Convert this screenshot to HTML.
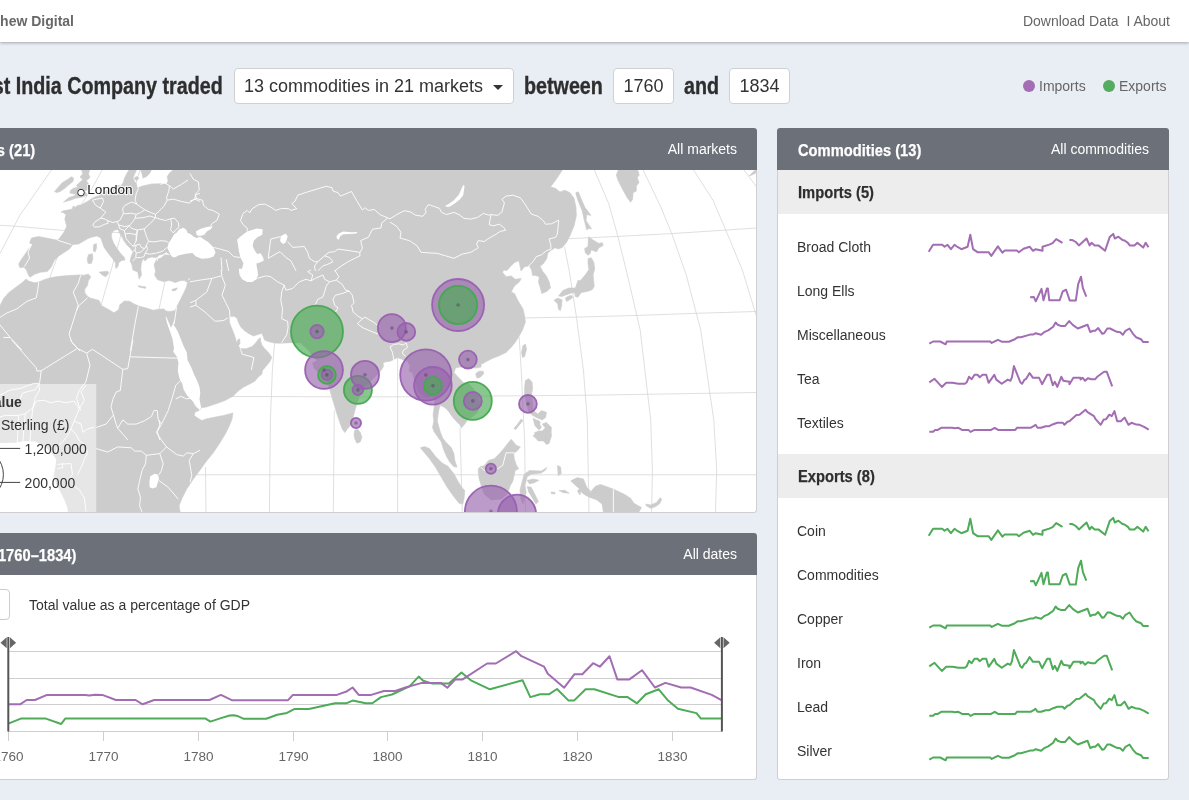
<!DOCTYPE html>
<html lang="en">
<head>
<meta charset="utf-8">
<title>East India Company Trade</title>
<style>
*{box-sizing:border-box;margin:0;padding:0}
html,body{width:1189px;height:800px;overflow:hidden}
body{background:#e9edf4;font-family:"Liberation Sans",sans-serif;color:#333;position:relative;font-size:14px}
.a{position:absolute;white-space:nowrap}
#nav{position:absolute;left:0;top:0;width:1189px;height:42px;background:#fff;box-shadow:0 1px 3px rgba(0,0,0,.3)}
.t14{font-size:14px;line-height:16px}
.cR{font-weight:bold;display:inline-block;transform-origin:100% 50%;transform:scaleX(.857)}
.cL{font-weight:bold;display:inline-block;transform-origin:0 50%;transform:scaleX(.857)}
.h2 .cL,.h2 .cR{transform:scaleX(.865)}
.h1{font-size:23px;line-height:28px;color:#2e2e2e;-webkit-text-stroke:0.35px #2e2e2e}
.h2{font-size:17px;line-height:22px;-webkit-text-stroke:0.25px}
.box{position:absolute;background:#fff;border:1px solid #d0d0d0;border-radius:4px;font-size:18px;color:#333;line-height:34px;height:36px;top:68px}
.panel{position:absolute;background:#fff;border-radius:3px}
.pborder{position:absolute;border:1px solid #cfcfcf;border-top:0;border-radius:0 0 3px 3px;pointer-events:none}
.phead{position:absolute;height:42px;background:#6c7079;border-radius:3px 3px 0 0}
.sub{position:absolute;left:778px;width:391px;height:44px;background:#ededed}
.w{color:#fff}
.d{color:#2e2e2e}
</style>
</head>
<body>
<div id="wrap" style="position:absolute;left:0;top:0;width:1189px;height:800px;overflow:hidden;will-change:transform">
<div id="nav"></div>
<div class="a t14" style="right:1115px;top:13px;font-weight:bold;color:#686868">Matthew Digital</div>
<div class="a t14" style="right:19px;top:13px;color:#666">Download Data &nbsp;I About</div>

<!-- title row -->
<div class="a h1" style="right:966px;top:71.5px"><span class="cR">The East India Company traded</span></div>
<div class="box" style="left:234px;width:280px;padding-left:9px">13 commodities in 21 markets<span style="position:absolute;right:10px;top:16px;width:0;height:0;border-left:5px solid transparent;border-right:5px solid transparent;border-top:5px solid #333"></span></div>
<div class="a h1" style="left:524px;top:71.5px"><span class="cL">between</span></div>
<div class="box" style="left:613px;width:61px;text-align:center">1760</div>
<div class="a h1" style="left:684px;top:71.5px"><span class="cL">and</span></div>
<div class="box" style="left:729px;width:61px;text-align:center">1834</div>
<div class="a" style="left:1023px;top:80px;width:12px;height:12px;border-radius:50%;background:#a36eb4"></div>
<div class="a t14" style="left:1039px;top:78px;color:#666">Imports</div>
<div class="a" style="left:1103px;top:80px;width:12px;height:12px;border-radius:50%;background:#55ab5f"></div>
<div class="a t14" style="left:1119px;top:78px;color:#666">Exports</div>

<!-- map panel -->
<div class="panel" style="left:-20px;top:128px;width:777px;height:385px"></div>
<div id="map" class="a" style="left:-20px;top:170px;width:776px;height:342px;overflow:hidden"><svg width="776" height="342" viewBox="-20 170 776 342" style="position:absolute;left:0;top:0">
<g fill="none" stroke="#d4d4d4" stroke-width="0.75">
<polyline points="-20.0,474.8 756.0,474.8"/>
<polyline points="190.0,396.4 390.0,396.9 590.0,395.2 756.0,392.5"/>
<polyline points="524.6,317.9 577.9,317.1 637.7,315.4 696.5,313.3 756.0,311.5"/>
<polyline points="-20.0,224.0 0.0,225.3 15.0,226.2 62.8,230.4 175.3,234.7 200.0,237.5 570.0,238.6 617.9,236.4 671.8,233.6 725.6,230.1 756.4,228.0"/>
<polyline points="0.0,253.4 20.0,215.0 51.5,170.0"/>
<polyline points="102.2,170.0 91.8,188.7 80.6,205.6 56.2,260.0 49.7,277.8 40.0,310.0"/>
<polyline points="140.0,170.0 123.7,224.4 116.2,252.5 102.2,301.2 95.0,330.0"/>
<polyline points="185.0,190.0 174.3,234.7 166.8,273.1 159.3,307.8 155.0,330.0"/>
<polyline points="205.5,467.0 206.0,512.0"/>
<polyline points="274.6,343.2 272.4,370.0 270.4,420.0 269.4,512.0"/>
<polyline points="334.3,410.4 333.3,512.0"/>
<polyline points="397.6,356.8 397.6,512.0"/>
<polyline points="460.0,428.0 462.3,512.0"/>
<polyline points="519.2,337.0 521.2,370.0 524.6,440.0 525.5,512.0"/>
<polyline points="564.5,246.8 569.1,270.0 576.7,318.8 583.4,370.0 587.3,420.0 589.0,512.0"/>
<polyline points="594.4,170.0 608.7,203.6 617.9,236.4 627.4,275.0 640.2,330.0 650.7,420.0 652.4,470.0 651.6,512.0"/>
<polyline points="643.2,170.0 660.8,207.0 671.8,233.6 686.4,275.4 700.7,330.0 713.8,420.0 716.7,470.0 715.5,512.0"/>
<polyline points="693.6,170.0 713.0,200.3 725.6,229.7 742.4,270.0 756.0,315.0"/>
<polyline points="744.1,170.0 756.4,186.8"/>
<polyline points="14.3,440.0 14.3,512.0"/>
</g>
<g fill="#cccccc" stroke="#cccccc" stroke-width="0.6" stroke-linejoin="round">
<polygon points="54.5,191.5 58.2,187.2 62.2,182.8 67.6,179.4 71.6,176.7 73.6,178.1 73.0,181.4 68.9,184.8 64.9,188.2 60.2,191.5 56.8,192.6"/>
<polygon points="81.0,168.7 82.8,173.4 80.1,177.0 82.8,179.7 79.3,182.8 76.3,185.5 77.9,187.2 73.4,188.2 70.3,190.5 69.9,193.1 75.3,194.2 75.3,195.6 68.9,197.6 63.5,202.0 70.3,200.3 75.3,198.3 81.7,197.2 87.1,195.6 86.4,193.1 84.4,191.5 88.7,188.8 90.1,185.5 87.8,182.8 86.4,180.8 90.1,177.4 88.4,174.0 90.1,168.7"/>
<polygon points="140.3,168.7 142.3,174.7 142.9,178.1 146.3,176.7 149.7,173.4 152.0,168.7"/>
<polygon points="134.5,177.4 137.2,176.5 138.9,178.3 136.9,180.5 134.9,179.4"/>
<polygon points="99.3,272.1 107.8,271.2 108.7,273.1 105.9,276.8 102.1,275.0"/>
<polygon points="88.4,254.8 92.4,253.7 92.9,258.7 91.2,263.8 87.9,263.2 87.3,258.7"/>
<polygon points="93.5,244.7 96.3,243.5 96.6,247.5 95.2,252.0 93.3,250.9"/>
<polygon points="138.3,285.7 146.0,287.0 145.5,288.4 138.8,287.0"/>
<polygon points="171.9,289.5 177.5,287.8 175.8,290.4 172.4,290.9"/>
<polygon points="164.9,254.7 160.8,258.1 156.5,259.6 154.1,264.7 155.6,271.2 154.6,275.0 157.4,279.6 163.1,281.5 169.6,280.6 175.2,282.5 180.9,280.6 187.4,280.6 189.3,277.8 194.9,278.7 215.5,276.8 215.5,253.4 200.0,253.4 191.2,252.5 183.7,253.4 176.2,255.3 169.6,255.3"/>
<polygon points="-21.9,367.7 -21.9,306.3 0.0,305.8 3.4,298.8 8.4,292.9 15.1,287.8 21.9,282.8 26.1,278.9 28.6,281.1 34.5,282.8 38.7,282.0 44.6,279.4 50.5,277.8 57.2,276.6 67.3,275.6 74.0,275.2 79.1,274.9 84.1,275.2 88.3,274.1 90.8,276.9 88.3,281.1 87.5,285.3 84.6,289.5 84.9,292.9 87.5,296.3 90.0,297.9 94.2,299.1 99.2,300.5 101.3,305.5 107.7,308.9 114.0,312.7 118.6,309.7 119.8,304.7 124.5,301.0 129.5,301.3 134.6,304.2 139.6,306.3 146.3,308.0 153.1,310.2 159.0,309.2 164.0,308.9 165.7,310.9 169.9,311.4 174.9,310.6 176.6,307.2 178.3,303.8 180.8,298.8 184.2,292.1 186.7,286.2 187.6,282.0 185.0,281.1 210.3,275.2 210.3,367.7"/>
<polygon points="616.3,175.0 618.8,168.7 637.3,168.7 639.3,175.0 637.3,177.6 639.0,182.6 636.4,186.0 636.4,191.0 633.1,192.7 632.6,199.4 630.6,202.3 627.2,197.8 622.1,188.5 617.9,180.1"/>
<polygon points="575.9,193.5 577.6,191.9 580.9,198.6 585.1,207.8 591.0,215.4 586.8,214.6 586.0,220.5 591.5,228.9 588.2,228.5 586.8,230.2 584.3,220.5 582.1,210.4 578.4,201.1"/>
<polygon points="575.9,192.7 578.4,191.9 580.9,198.6 584.3,207.0 589.3,213.7 586.0,214.1 581.8,208.7 578.1,200.3"/>
<polygon points="749.1,175.9 753.3,171.7 756.4,169.2 758.4,169.2 758.4,171.7 752.5,174.7"/>
<polygon points="588.5,236.7 593.1,240.1 599.0,243.5 602.3,242.6 603.2,245.5 599.0,247.7 596.4,251.9 591.4,249.8 590.2,253.5 588.0,255.2 585.2,252.7 584.7,248.5 588.0,246.5"/>
<polygon points="588.0,258.6 591.4,257.8 593.9,262.8 594.8,268.7 593.1,274.6 593.6,280.5 594.3,286.3 592.2,289.7 587.2,291.4 581.3,292.6 577.9,297.3 575.1,296.4 575.1,293.6 572.9,292.6 566.2,294.8 562.0,296.4 558.6,295.9 562.8,290.6 568.7,288.0 575.4,288.0 577.9,280.5 580.5,280.5 585.5,274.6 588.9,269.5 588.0,263.6"/>
<polygon points="565.3,298.1 567.8,296.4 571.2,295.3 572.9,297.3 570.4,299.3 566.7,301.5"/>
<polygon points="553.9,300.3 557.8,298.1 562.0,299.8 561.6,305.7 560.3,310.7 558.3,309.1 557.8,304.0"/>
<polygon points="522.9,345.7 525.4,344.0 526.6,349.1 524.6,356.6 522.5,357.5 521.5,352.4"/>
<polygon points="475.6,373.8 478.8,371.2 483.1,371.2 483.8,373.8 480.0,377.5 476.9,378.1"/>
<polygon points="354.5,430.6 357.4,428.9 360.2,432.2 361.9,437.3 360.2,442.0 356.9,443.2 354.8,439.0 354.0,434.8"/>
<polygon points="420.3,447.8 424.5,446.6 429.5,448.6 435.4,456.2 442.1,462.9 448.0,466.3 453.9,473.8 458.1,481.4 462.3,488.1 464.9,490.6 464.0,499.1 462.7,504.1 459.0,503.3 453.1,495.7 447.2,487.3 441.3,477.2 435.4,467.1 429.5,458.7 424.5,452.8"/>
<polygon points="478.3,468.8 480.8,466.3 484.2,465.8 488.4,460.4 494.3,458.7 500.2,452.8 504.4,447.8 507.7,443.5 511.1,439.3 513.6,441.9 516.2,445.2 520.4,446.9 517.0,451.1 513.6,453.6 514.5,459.5 516.2,464.6 518.7,468.8 515.3,470.5 514.1,475.5 512.8,481.4 510.3,485.6 508.6,490.6 506.1,494.9 501.0,499.1 490.9,499.9 484.2,494.0 481.7,487.3 479.2,478.9 478.3,472.1"/>
<polygon points="524.2,474.2 529.6,470.5 541.4,471.0 546.8,467.6 545.6,470.1 541.4,473.0 531.3,474.2 526.6,477.2"/>
<polygon points="524.2,474.2 527.1,478.0 524.6,485.6 526.2,492.3 524.6,499.1 522.9,504.1 520.9,499.1 519.9,490.6 522.0,482.2"/>
<polygon points="527.1,480.6 533.0,478.9 538.9,480.2 534.7,482.6 529.6,483.9"/>
<polygon points="527.1,486.4 531.3,487.3 534.7,494.0 538.4,501.6 536.0,504.1 532.1,497.4 528.8,492.3"/>
<polygon points="514.1,428.4 522.0,420.0 522.9,420.8 515.3,429.3"/>
<polygon points="533.0,436.0 538.0,430.9 541.4,431.8 547.3,425.9 550.6,430.1 551.5,436.0 549.0,443.5 546.4,444.4 542.2,439.3 538.9,435.1 535.5,437.7"/>
<polygon points="534.7,423.4 538.0,420.0 540.5,422.5 537.2,426.7"/>
<polygon points="525.4,380.4 528.8,378.7 532.1,382.1 532.6,388.8 531.3,395.5 533.0,403.9 533.0,410.6 538.0,414.0 541.4,410.6 546.4,412.3 545.6,417.4 542.2,419.9 538.0,418.2 533.0,415.7 528.8,412.3 526.6,403.9 524.6,395.5 524.6,387.1"/>
<polygon points="533.0,418.2 538.0,420.7 541.4,427.5 538.9,430.0 535.0,425.8"/>
<polygon points="542.2,424.1 546.4,422.4 551.5,427.5 550.6,435.9 548.1,434.2 545.6,428.3"/>
<polygon points="534.7,432.5 541.4,430.8 546.4,436.7 545.6,440.9 538.0,440.9 535.5,437.6"/>
<polygon points="514.5,428.3 521.2,419.1 522.4,420.1 515.8,429.5"/>
<polygon points="557.4,465.4 560.7,467.1 561.2,473.8 558.2,475.5"/>
<polygon points="571.7,480.6 576.7,478.0 583.4,478.9 586.8,487.3 590.0,490.6 590.0,497.4 583.4,494.0 578.4,487.3 575.0,483.1"/>
<polygon points="559.0,490.6 564.9,490.3 569.1,493.2 563.3,492.7"/>
<polygon points="551.1,492.0 554.8,492.3 555.2,494.0 551.5,493.7"/>
<polygon points="570.8,480.9 577.6,477.7 583.5,479.7 584.8,487.3 590.2,492.3 595.2,486.4 600.3,484.4 606.2,486.4 613.7,489.3 623.8,494.0 630.6,498.2 633.9,503.3 641.5,507.5 638.1,513.4 603.6,513.4 602.0,504.1 596.9,499.9 590.2,497.4 584.3,494.0 580.9,491.5 580.1,494.9 578.1,492.3 577.6,490.3 580.1,489.0 576.7,486.4"/>
<polygon points="645.7,504.1 650.7,504.9 656.6,502.4 660.0,497.7 661.7,499.1 660.0,503.3 655.8,506.6 650.7,508.3 646.5,506.1"/>
<polygon points="61.3,212.8 62.9,210.8 67.6,210.1 72.3,209.0 73.0,206.3 75.7,207.0 77.9,205.3 81.0,205.0 85.1,202.7 88.2,201.0 91.4,198.7 95.2,196.9 99.2,195.6 103.2,192.9 107.3,190.2 111.3,186.8 117.4,185.5 120.7,185.9 123.2,182.8 124.5,178.1 126.8,173.4 129.9,168.7 137.2,168.7 134.9,173.4 133.1,177.4 134.5,181.4 136.6,184.1 137.2,188.2 142.3,186.1 151.7,183.9 161.8,183.7 166.5,184.1 168.1,180.8 167.2,176.7 169.5,173.0 174.6,168.7 214.9,168.7 215.6,256.2 170.0,254.5 166.0,252.0 163.2,254.2 159.3,255.1 156.5,257.8 152.0,257.0 147.5,258.2 145.2,261.0 143.0,258.7 141.3,263.2 140.7,270.0 140.9,270.3 141.5,275.0 139.1,279.1 137.8,272.1 132.9,270.0 131.7,264.3 130.0,261.0 131.2,256.5 132.9,252.0 130.6,248.6 127.2,245.2 123.9,240.7 121.6,236.2 119.4,232.9 118.8,230.8 117.1,229.5 113.7,230.4 111.3,234.0 111.8,238.5 113.7,243.2 117.1,248.8 120.5,253.3 124.4,257.6 125.0,260.1 121.6,260.4 118.8,262.7 118.0,266.6 115.8,268.6 115.4,262.7 112.6,258.7 108.1,253.1 104.2,247.5 102.3,242.4 100.8,237.9 96.9,236.0 92.4,237.1 88.1,238.4 83.4,241.2 78.7,244.0 72.7,244.6 69.7,248.7 64.1,252.5 58.5,256.2 54.4,260.3 51.0,267.5 47.2,271.6 40.3,272.3 34.7,274.2 30.0,277.2 28.5,275.3 26.6,270.3 24.0,267.1 19.9,267.8 18.7,264.1 21.0,260.0 24.7,254.7 28.1,249.7 32.2,245.3 29.6,242.7 31.5,238.0 38.4,236.5 49.1,238.6 57.7,240.3 60.4,237.1 64.1,231.9 66.7,226.2 64.8,219.1 66.0,214.6 61.5,211.6"/>
<polygon points="190.0,160.0 563.0,160.0 562.4,170.0 555.7,180.1 550.6,186.8 555.7,188.5 559.9,191.9 564.9,190.2 570.0,192.7 574.2,198.6 575.9,207.0 576.4,215.4 574.2,225.5 570.0,235.6 566.6,242.3 562.4,247.4 558.2,249.1 555.2,247.7 551.0,250.2 547.7,253.5 546.8,258.6 543.5,263.6 540.1,266.2 542.6,271.2 546.0,275.4 549.3,282.1 550.5,288.0 546.8,291.4 541.8,293.6 540.1,287.2 538.4,282.1 539.3,277.1 535.9,275.4 532.5,275.4 531.7,270.4 530.0,267.0 529.6,265.9 524.6,266.7 521.0,271.0 519.5,263.5 518.7,260.8 514.5,262.5 510.5,266.5 507.0,270.5 503.5,270.0 502.7,272.5 506.1,276.7 511.1,275.9 515.3,279.3 521.2,278.4 519.5,281.8 514.5,286.0 511.1,291.9 514.5,293.5 517.8,300.3 522.9,308.7 524.6,315.4 525.4,322.1 522.9,328.9 519.5,335.6 515.3,342.3 511.1,347.4 506.1,352.4 499.3,355.8 492.6,358.3 485.9,361.7 481.7,364.2 481.2,362.5 481.0,367.0 479.4,367.5 477.5,367.8 474.0,368.0 468.0,368.5 460.0,366.9 455.5,368.0 454.0,372.5 458.0,377.0 463.8,383.1 467.5,382.5 472.0,387.0 476.0,392.5 478.0,397.0 480.0,405.0 477.5,412.5 472.0,417.0 467.5,420.0 465.0,423.8 461.3,428.1 460.0,425.0 455.0,420.0 451.9,416.3 449.4,412.5 446.3,408.8 442.5,406.3 440.0,405.6 438.8,410.0 438.1,415.0 437.3,421.3 438.8,426.7 440.5,432.6 443.0,438.5 446.4,442.7 451.4,447.8 453.9,453.6 454.8,460.4 457.0,467.1 453.9,466.8 449.7,462.1 446.4,456.2 443.5,449.4 441.3,441.9 437.1,436.0 434.1,431.8 432.5,427.5 433.8,421.3 433.1,415.0 434.0,407.5 435.0,400.0 432.5,396.3 427.5,397.5 421.3,395.0 417.5,390.0 416.3,382.5 413.8,377.5 412.5,372.8 409.0,371.3 410.0,366.3 407.5,361.3 400.6,358.8 397.5,357.5 393.8,359.5 390.0,361.3 385.0,362.0 383.1,363.1 383.5,366.5 381.3,370.0 378.4,373.4 371.7,380.1 364.9,386.8 359.9,395.2 356.9,403.6 354.8,411.2 352.8,418.8 350.6,425.5 347.8,428.5 344.8,432.6 342.2,428.9 339.7,422.1 336.3,412.0 333.8,403.6 331.3,395.2 328.8,386.8 327.5,380.0 326.0,374.0 327.0,369.0 323.0,371.0 319.0,373.0 314.0,368.0 312.5,363.0 317.0,360.5 313.0,357.0 310.5,353.0 308.6,350.4 304.4,346.5 300.2,342.7 290.9,342.7 280.6,343.2 274.5,343.1 270.0,342.0 264.8,340.2 263.3,336.8 261.8,333.3 257.3,334.8 253.5,336.0 249.0,333.8 244.5,330.8 240.8,327.0 238.5,322.5 237.0,318.3 234.0,316.2 229.1,316.8 229.5,322.5 231.8,328.5 234.0,333.8 235.5,338.3 236.8,343.0 237.8,339.8 239.7,338.7 240.0,343.5 238.5,345.8 240.0,348.8 246.0,348.8 252.0,346.5 255.8,342.8 258.3,339.3 260.3,337.8 260.7,341.3 261.8,345.0 264.8,348.8 268.5,352.5 271.8,357.3 270.0,361.5 266.3,366.0 262.5,370.5 261.8,374.3 258.0,377.3 255.0,381.0 249.8,384.0 243.8,387.0 238.5,390.8 233.3,396.0 225.0,400.5 216.0,403.8 207.0,406.8 202.5,407.7 201.8,407.0 199.3,410.4 195.0,412.1 194.2,415.4 197.6,417.9 201.8,420.5 206.8,418.8 215.2,417.1 223.6,415.4 232.9,412.9 232.1,418.8 229.5,425.5 225.3,433.9 220.3,442.3 213.5,452.4 206.0,461.7 200.1,469.9 193.4,478.9 186.7,489.0 181.7,499.0 179.1,505.8 180.8,516.0 -25.0,516.0 -25.0,345.0 120.0,345.0 160.0,335.0 190.0,300.0"/>
<polygon points="186.3,229.7 189.0,228.5 192.0,229.5 196.0,231.5 200.5,236.0 196.5,238.2 193.6,236.8 190.8,234.2 187.7,232.9"/>
</g>
<g fill="#fff" stroke="none">
<polygon points="195.9,231.4 200.1,228.9 206.8,226.9 212.7,226.3 211.0,228.9 206.8,231.4 204.3,234.8 200.1,235.9 196.7,235.3"/>
<polygon points="247.2,231.4 256.4,228.5 262.7,229.2 262.3,234.8 257.3,237.3 253.9,240.6 252.6,245.7 254.8,250.7 257.3,254.1 260.6,253.3 263.2,257.5 263.7,260.8 259.8,262.5 256.4,263.4 257.3,270.9 241.3,270.9 243.5,263.4 240.5,257.5 238.8,250.7 237.9,244.0 237.1,239.8 240.5,236.4 243.8,233.9"/>
<polygon points="238.8,268.7 257.3,268.7 258.1,275.0 256.4,279.3 252.2,282.1 247.2,282.1 242.1,279.3 239.6,275.0"/>
<polygon points="281.7,235.6 285.9,233.6 287.6,236.4 285.9,242.3 283.4,244.0 280.8,242.3 280.0,239.8"/>
<polygon points="336.3,236.4 338.9,233.6 343.1,231.4 351.5,232.2 357.4,231.9 356.5,233.6 349.8,233.9 343.1,234.3 340.0,236.4 338.9,239.8 337.2,239.0"/>
<polygon points="445.2,205.7 448.0,204.5 453.9,200.3 459.0,194.4 462.3,186.8 464.0,184.8 464.5,186.8 463.2,195.2 459.8,199.4 454.8,203.6 449.7,206.7 446.3,206.7"/>
<polygon points="150.2,476.3 154.8,473.8 158.1,474.7 159.0,478.9 157.3,483.9 156.4,487.3 152.2,488.6 149.7,487.3 149.4,482.2"/>
<polygon points="-21.9,443.5 15.1,442.7 25.2,441.0 35.3,441.5 45.4,446.9 52.1,453.6 56.3,459.5 55.5,466.3 53.8,475.5 56.3,483.9 60.6,492.3 64.8,500.7 67.3,507.5 68.3,514.2 -21.9,514.2"/>
<polygon points="165.5,316.5 166.5,317.3 168.8,322.5 171.0,327.8 172.6,324.5 174.2,320.6 175.0,321.0 173.6,325.0 174.8,326.5 177.8,331.5 180.8,339.0 183.8,346.5 186.8,352.5 187.5,360.0 191.3,367.5 194.3,375.0 197.3,381.0 199.5,387.0 200.3,393.0 199.5,399.0 201.0,407.3 199.8,410.6 198.0,408.0 193.5,402.0 187.5,396.0 183.8,390.0 182.3,384.0 179.3,378.0 177.8,370.5 178.5,363.0 177.0,357.0 173.3,351.8 174.0,348.0 172.5,339.0 169.5,330.0 167.3,324.0"/>
<polygon points="170.0,253.3 167.2,248.0 168.8,243.0 171.7,238.5 174.2,234.2 176.9,232.6 179.0,229.5 183.2,227.8 186.3,229.7 187.7,232.9 190.8,234.2 193.6,236.8 196.5,238.0 200.0,236.8 202.6,238.6 208.5,242.3 213.5,247.4 215.6,252.4 213.5,256.6 208.5,258.3 201.8,258.8 195.9,256.6 192.5,253.1 185.7,253.7 179.0,255.3 174.5,257.6 171.7,256.5"/>
</g>
<g fill="none" stroke="#fff" stroke-width="0.9" stroke-linejoin="round">
<polyline points="240.5,220.5 243.0,213.7 247.2,210.4 249.7,212.9 252.2,208.7 259.0,204.5 264.9,204.1 270.7,207.0 275.8,210.4 281.7,208.4 288.4,208.7 290.9,210.4 296.8,208.7 291.8,203.6 295.1,201.1 297.7,195.2 307.7,191.9 317.8,188.8 326.2,186.3 332.1,187.7 333.0,191.0 338.0,192.7 340.5,196.1 351.5,191.5 356.5,200.3 362.4,210.0 364.9,207.8 368.3,210.4 374.2,209.5 380.1,214.6 387.6,217.9 390.0,218.8"/>
<polyline points="240.5,220.5 243.8,225.5 247.2,228.0 247.2,231.4"/>
<polyline points="387.6,217.9 381.8,223.0 380.9,228.0 372.5,229.2 368.3,237.3 360.7,240.6 362.4,248.2 359.9,252.4 349.8,250.7 338.0,249.1 334.7,251.6 328.8,252.4 324.6,255.8 317.8,261.7 314.5,265.9 315.3,270.9"/>
<polyline points="268.2,258.3 270.7,239.0 281.7,236.4"/>
<polyline points="287.6,241.5 292.6,247.4 304.4,246.5 307.7,252.4 309.4,258.3 314.5,261.7 317.8,261.7"/>
<polyline points="268.2,258.3 280.0,251.6 285.9,257.5 290.9,260.8 296.0,270.9"/>
<polyline points="324.6,255.8 329.6,257.5 333.0,261.7 327.9,264.2 322.9,265.9 317.8,270.9"/>
<polyline points="334.7,270.9 341.4,265.9 348.1,261.7 359.9,255.8 359.9,252.4"/>
<polyline points="190.0,173.4 193.4,179.3 198.4,181.8 199.3,190.2 195.0,194.4 196.7,198.6 190.0,201.1"/>
<polyline points="196.7,198.6 202.6,200.3 203.5,205.3 208.5,209.5 212.7,210.4 219.4,214.1 216.9,220.5 212.7,223.0 210.2,226.3"/>
<polyline points="213.5,247.4 220.3,249.1 228.7,251.6 233.7,256.6 240.5,257.5"/>
<polyline points="221.1,257.5 222.0,270.9"/>
<polyline points="226.2,259.2 228.7,270.9"/>
<polyline points="390.0,218.8 396.7,214.6 404.3,210.7 411.0,212.1 415.2,215.1 422.8,216.3 426.2,212.1 425.0,209.5 428.4,204.5 434.6,206.7 439.6,208.4 441.3,212.1 446.3,214.6 453.9,212.4 459.0,214.6 464.0,218.4 470.7,219.1 477.5,217.4 483.4,213.4 488.4,215.1 490.9,214.6 489.2,224.7 493.4,225.8 499.3,224.2 503.5,227.2 505.7,230.2 500.2,231.4 495.1,234.8 489.2,238.1 484.2,241.5 478.3,240.6 476.6,244.0 478.3,247.7 470.7,252.4 462.3,254.1 453.9,258.3 445.5,255.8 437.1,253.3 428.7,252.8 421.1,252.4 416.9,245.7 409.3,240.6 400.1,238.1 400.9,232.2 396.7,226.3 390.0,222.1"/>
<polyline points="490.9,214.6 497.7,215.4 501.9,212.1 504.4,202.8 501.9,199.4 506.1,196.1 512.8,195.2 520.4,197.8 524.6,203.6 531.3,214.1 538.0,216.3 543.1,220.5 545.6,224.2 551.5,223.8 558.7,220.1 557.4,233.9 555.7,237.3 549.0,239.0 550.6,244.0 551.1,249.1 546.4,250.7 541.4,254.9 536.3,256.6 533.0,261.7 527.9,266.7 526.2,269.9"/>
<polyline points="221.1,270.0 222.0,276.7 225.3,285.1 222.0,295.2 226.2,303.6 229.5,310.4 230.0,317.1"/>
<polyline points="190.0,281.8 200.1,280.1 211.9,278.4 221.1,275.9"/>
<polyline points="211.9,278.4 206.8,291.9 195.9,300.3 190.0,302.8"/>
<polyline points="195.9,300.3 195.9,305.3 190.0,307.0"/>
<polyline points="195.9,305.3 205.1,312.1 215.2,321.3 223.6,320.5 227.8,317.9"/>
<polyline points="257.3,278.4 265.7,275.9 270.7,276.7 277.5,281.8 284.2,285.1 281.7,291.9 280.8,300.3 282.5,308.7 281.7,318.8 287.6,321.3 288.1,327.2 286.7,334.8 281.7,342.7"/>
<polyline points="284.2,285.1 285.9,290.2 292.6,288.5 299.3,281.8 306.1,279.3 311.1,280.9 315.3,278.4 322.9,275.0 324.6,279.3 329.6,281.8 326.2,286.0 324.6,291.9 322.9,296.9 317.8,299.4 315.3,304.5"/>
<polyline points="311.1,280.9 312.8,275.0 307.7,271.7 311.1,270.0"/>
<polyline points="329.6,281.8 336.3,280.1 338.9,276.7 334.7,270.0"/>
<polyline points="336.3,280.1 342.2,284.3 345.6,290.2 349.0,291.0 352.3,295.2 354.0,302.8 351.5,305.3 353.2,312.1 358.2,316.3 362.4,318.8 364.9,317.1 373.3,322.1 380.1,327.2"/>
<polyline points="362.4,318.8 357.4,323.8 363.3,328.0 373.3,332.2 380.1,334.8"/>
<polyline points="349.0,291.0 342.2,293.5 335.5,295.2 333.0,299.4 334.7,305.3 338.0,307.8 335.5,312.1"/>
<polyline points="240.5,349.1 242.1,354.1 253.9,357.5 251.4,369.9"/>
<polyline points="11.8,340.0 36.2,367.8 37.0,371.1 41.2,370.8 77.4,348.4 72.3,342.5 70.6,340.0"/>
<polyline points="77.4,348.4 86.6,353.1 92.5,349.3 122.8,369.4 127.8,368.6 132.9,340.0"/>
<polyline points="86.6,353.1 90.0,365.2 85.8,382.1 79.1,390.5 76.5,398.0 79.1,406.4 80.7,410.6"/>
<polyline points="41.2,370.8 39.5,383.7 35.3,389.6 22.7,393.0 20.2,398.9"/>
<polyline points="122.8,369.4 120.3,390.5 116.1,392.1 112.7,399.7 111.0,407.3 113.5,414.9 116.1,424.1 117.7,428.3 127.8,439.9"/>
<polyline points="129.9,356.8 177.5,358.2"/>
<polyline points="117.7,428.3 122.8,419.9 127.8,424.1 136.2,424.1 144.7,420.7 151.4,416.5 153.9,410.6 157.3,410.6 158.1,419.1 161.5,424.1 157.3,431.7 159.8,439.9"/>
<polyline points="161.5,424.1 168.2,410.6 172.4,397.2 175.8,385.4 180.8,380.4"/>
<polyline points="175.8,398.9 180.8,396.3 186.7,398.9 191.8,398.0 196.0,406.4 200.0,409.0"/>
<polyline points="113.5,414.9 106.0,424.1 96.2,427.5"/>
<polyline points="96.2,448.6 107.7,452.0 117.7,446.9 131.2,447.8 134.6,451.1 141.3,451.1 146.3,455.3 159.8,453.6 166.5,446.9 161.5,440.2 156.4,432.6 159.8,425.0 159.0,420.0"/>
<polyline points="146.3,455.3 145.5,463.7 142.1,470.5 139.6,480.6 137.9,489.0 140.5,497.4 139.6,505.8 142.1,512.5"/>
<polyline points="159.8,453.6 163.2,463.7 161.5,470.5 159.0,474.7"/>
<polyline points="159.0,480.6 168.2,487.3 178.3,499.1"/>
<polyline points="166.5,446.9 176.6,454.5 183.3,456.2 186.7,452.8 193.4,453.6 200.0,450.3"/>
<polyline points="193.4,453.6 189.2,460.4 191.8,475.5 190.1,482.2"/>
<polyline points="38.7,282.0 37.8,289.5 36.2,297.9 26.9,301.3 16.8,308.9 6.7,313.1 0.0,317.3"/>
<polyline points="0.0,324.9 10.1,337.5 21.9,349.9"/>
<polyline points="3.4,337.5 10.1,337.5"/>
<polyline points="80.7,275.2 78.2,283.6 73.2,292.1 76.5,300.5 78.2,305.5 76.5,310.6 72.3,324.0 69.0,334.1 71.5,341.7 77.4,348.4 79.9,350.9"/>
<polyline points="76.5,310.6 79.1,305.5 87.5,297.9"/>
<polyline points="138.3,306.3 134.6,325.7 130.4,350.9"/>
<polyline points="176.6,307.2 174.1,324.0"/>
<polyline points="613.4,489.3 613.4,512.5"/>
<polyline points="480.8,467.1 484.2,470.5 490.9,471.3 497.7,468.8 502.7,465.4 506.1,452.8 514.5,452.8"/>
<polyline points="92.4,200.2 95.7,205.3 100.2,208.1 105.9,212.1 102.5,216.0 100.8,218.2"/>
<polyline points="92.4,200.2 96.9,199.1 102.5,198.0 103.6,201.4 100.2,208.1"/>
<polyline points="100.8,218.2 94.6,222.2 92.9,225.0 94.6,227.2 99.7,226.7 104.2,224.4 108.1,223.3 107.6,220.5 104.2,218.8 100.8,218.2"/>
<polyline points="107.6,220.5 112.6,222.5 117.1,221.6 119.9,220.3 123.3,213.7"/>
<polyline points="123.3,213.7 122.7,208.1 125.0,205.3 131.7,201.9 136.8,204.2 140.7,207.0 144.7,209.8 140.7,212.6 136.2,214.3 131.2,213.2 126.1,213.7 123.3,213.7"/>
<polyline points="136.8,204.2 135.1,200.2 136.2,193.5 138.5,188.4"/>
<polyline points="169.4,185.6 168.8,191.2 166.6,196.9 167.2,200.2 163.8,206.4 158.7,211.5 155.4,214.3 149.7,212.1 144.7,209.8"/>
<polyline points="136.2,214.3 135.1,218.2 143.0,217.7 149.7,216.0 155.4,217.7 155.4,214.3"/>
<polyline points="117.1,221.6 118.8,225.0 125.0,226.7 129.5,225.5 132.9,221.6 135.1,218.2"/>
<polyline points="129.5,225.5 131.7,228.4 137.4,230.0 144.1,228.9 148.6,225.0 152.5,221.0 155.4,217.7"/>
<polyline points="118.8,225.0 119.4,228.4 124.4,230.6 129.5,225.5"/>
<polyline points="124.4,230.6 125.0,234.0 129.5,233.4 136.2,234.5 137.4,230.0"/>
<polyline points="125.0,234.0 126.1,238.5 130.6,244.1 133.4,246.4 136.2,240.7 136.2,234.5"/>
<polyline points="137.4,230.0 136.8,236.2 136.2,240.7"/>
<polyline points="144.1,228.9 146.4,236.2 148.6,241.3 146.4,245.2 144.7,248.6 141.3,247.5 139.6,244.1 136.2,245.2 133.4,246.4"/>
<polyline points="155.4,217.7 161.0,219.4 165.5,220.5 170.5,218.8 174.5,218.2 178.4,222.7 179.0,227.2 175.6,230.0 173.3,232.9"/>
<polyline points="170.5,218.8 171.1,220.5 171.7,225.0 170.5,229.5 173.3,232.9"/>
<polyline points="148.6,241.3 154.2,241.9 161.0,240.7 166.6,241.3 168.8,243.0"/>
<polyline points="146.4,245.2 147.5,249.7 145.2,253.1 149.7,254.2 156.5,253.1 163.2,250.9 166.6,247.5"/>
<polyline points="136.2,245.2 135.1,249.7 136.2,253.1 140.7,252.0 144.7,248.6"/>
<polyline points="135.1,249.7 132.3,252.0"/>
<polyline points="136.2,253.1 135.7,257.6 132.9,261.0"/>
<polyline points="145.2,253.1 144.1,256.5 140.7,257.6 135.7,257.6"/>
<polyline points="169.4,185.6 173.3,189.0 181.2,184.5 188.0,180.0"/>
<polyline points="167.2,200.2 173.3,199.1 181.2,201.4 189.1,203.1 194.7,199.1 195.8,194.6 200.0,193.5"/>
<polyline points="194.7,199.1 200.0,201.4"/>
<polyline points="160.4,184.5 164.3,182.8 169.4,185.6"/>
<polyline points="156.5,257.8 157.6,261.0"/>
<polyline points="57.7,240.3 63.7,242.2 71.2,244.6"/>
<polyline points="31.5,244.0 28.1,252.5 29.6,258.1 24.4,266.5"/>
<polyline points="390.0,346.9 393.8,344.4 398.8,343.8 403.1,345.0 406.2,343.1 407.5,347.5 403.1,350.6 402.5,353.8 405.6,356.2"/>
<polyline points="390.0,346.9 392.5,352.5 393.8,360.0"/>
<polyline points="32.9,407.8 36.3,401.1 43.9,400.2 50.6,402.8 58.2,401.1 65.8,402.8 74.2,401.1 79.3,408.7 76.8,414.6 74.2,421.3 70.9,428.9 67.5,435.7 62.4,442.4 57.4,446.6 55.7,454.2"/>
<polyline points="79.3,408.7 84.4,400.2 81.0,391.8 86.0,385.1"/>
<polyline points="74.2,421.3 81.0,423.9 82.7,432.3 87.7,428.9 94.5,427.2"/>
<polyline points="32.9,407.8 31.2,422.2 30.4,435.7 29.5,445.8"/>
<polyline points="25.3,413.7 23.6,430.6 22.8,444.1"/>
<polyline points="18.6,415.4 17.7,435.7 16.9,445.8"/>
<polyline points="0.0,417.1 5.1,415.4 18.6,415.4 25.3,413.7 32.9,407.8 35.4,396.9 39.6,390.1 38.8,383.4"/>
<polyline points="70.9,428.9 75.9,434.0 79.3,440.7 84.4,444.1 87.7,452.5 84.4,459.3 81.0,467.7 77.6,474.5"/>
<polyline points="57.4,464.4 70.9,463.5 72.5,474.5 67.5,481.2"/>
<polyline points="62.4,462.7 62.8,467.7 57.4,468.6"/>
<polyline points="67.5,488.0 74.2,486.3 79.3,489.7 84.4,498.1 86.0,511.6"/>
<polyline points="0.0,395.2 10.1,390.1 20.2,388.4 33.7,383.4 38.8,383.4"/>
</g>
<g fill="none" stroke="#999" stroke-opacity="0.45" stroke-width="0.8">
</g>
<circle cx="317.0" cy="331.6" r="26.00" fill="rgba(74,170,82,0.66)" stroke="rgba(70,168,80,0.95)" stroke-width="1.8"/>
<circle cx="458.1" cy="305.0" r="26.00" fill="rgba(150,98,172,0.64)" stroke="rgba(152,96,176,0.95)" stroke-width="1.8"/>
<circle cx="425.8" cy="375.0" r="25.60" fill="rgba(150,98,172,0.64)" stroke="rgba(152,96,176,0.95)" stroke-width="1.8"/>
<circle cx="490.9" cy="511.7" r="26.00" fill="rgba(150,98,172,0.64)" stroke="rgba(152,96,176,0.95)" stroke-width="1.8"/>
<circle cx="458.1" cy="305.0" r="19.10" fill="rgba(74,170,82,0.66)" stroke="rgba(70,168,80,0.95)" stroke-width="1.8"/>
<circle cx="472.8" cy="400.9" r="19.00" fill="rgba(74,170,82,0.66)" stroke="rgba(70,168,80,0.95)" stroke-width="1.8"/>
<circle cx="324.0" cy="370.0" r="18.90" fill="rgba(150,98,172,0.64)" stroke="rgba(152,96,176,0.95)" stroke-width="1.8"/>
<circle cx="432.9" cy="385.8" r="18.80" fill="rgba(150,98,172,0.64)" stroke="rgba(152,96,176,0.95)" stroke-width="1.8"/>
<circle cx="517.0" cy="513.7" r="19.00" fill="rgba(150,98,172,0.64)" stroke="rgba(152,96,176,0.95)" stroke-width="1.8"/>
<circle cx="357.9" cy="389.9" r="14.00" fill="rgba(74,170,82,0.66)" stroke="rgba(70,168,80,0.95)" stroke-width="1.8"/>
<circle cx="365.0" cy="374.9" r="14.00" fill="rgba(150,98,172,0.64)" stroke="rgba(152,96,176,0.95)" stroke-width="1.8"/>
<circle cx="391.9" cy="328.1" r="14.00" fill="rgba(150,98,172,0.64)" stroke="rgba(152,96,176,0.95)" stroke-width="1.8"/>
<circle cx="326.9" cy="374.9" r="8.90" fill="rgba(74,170,82,0.66)" stroke="rgba(70,168,80,0.95)" stroke-width="1.8"/>
<circle cx="432.9" cy="385.8" r="8.90" fill="rgba(74,170,82,0.66)" stroke="rgba(70,168,80,0.95)" stroke-width="1.8"/>
<circle cx="406.3" cy="331.9" r="8.90" fill="rgba(150,98,172,0.64)" stroke="rgba(152,96,176,0.95)" stroke-width="1.8"/>
<circle cx="467.9" cy="359.6" r="8.90" fill="rgba(150,98,172,0.64)" stroke="rgba(152,96,176,0.95)" stroke-width="1.8"/>
<circle cx="472.8" cy="400.9" r="9.00" fill="rgba(150,98,172,0.64)" stroke="rgba(152,96,176,0.95)" stroke-width="1.8"/>
<circle cx="527.9" cy="403.9" r="8.90" fill="rgba(150,98,172,0.64)" stroke="rgba(152,96,176,0.95)" stroke-width="1.8"/>
<circle cx="317.0" cy="331.6" r="6.70" fill="rgba(150,98,172,0.64)" stroke="rgba(152,96,176,0.95)" stroke-width="1.8"/>
<circle cx="326.9" cy="374.9" r="5.30" fill="rgba(150,98,172,0.64)" stroke="rgba(152,96,176,0.95)" stroke-width="1.8"/>
<circle cx="357.9" cy="389.9" r="5.30" fill="rgba(150,98,172,0.64)" stroke="rgba(152,96,176,0.95)" stroke-width="1.8"/>
<circle cx="356.0" cy="423.0" r="5.10" fill="rgba(150,98,172,0.64)" stroke="rgba(152,96,176,0.95)" stroke-width="1.8"/>
<circle cx="490.9" cy="468.8" r="5.10" fill="rgba(150,98,172,0.64)" stroke="rgba(152,96,176,0.95)" stroke-width="1.8"/>
<circle cx="317" cy="331.6" r="1.8" fill="rgba(75,50,90,0.42)"/>
<circle cx="326.9" cy="374.9" r="1.8" fill="rgba(75,50,90,0.42)"/>
<circle cx="365" cy="374.7" r="1.8" fill="rgba(75,50,90,0.42)"/>
<circle cx="357.9" cy="389.9" r="1.8" fill="rgba(75,50,90,0.42)"/>
<circle cx="391.9" cy="328.1" r="1.8" fill="rgba(75,50,90,0.42)"/>
<circle cx="406.3" cy="331.9" r="1.8" fill="rgba(75,50,90,0.42)"/>
<circle cx="356" cy="423" r="1.8" fill="rgba(75,50,90,0.42)"/>
<circle cx="458.1" cy="305" r="1.8" fill="rgba(75,50,90,0.42)"/>
<circle cx="467.9" cy="359.6" r="1.8" fill="rgba(75,50,90,0.42)"/>
<circle cx="425.8" cy="375" r="1.8" fill="rgba(75,50,90,0.42)"/>
<circle cx="432.9" cy="385.8" r="1.8" fill="rgba(75,50,90,0.42)"/>
<circle cx="472.8" cy="400.9" r="1.8" fill="rgba(75,50,90,0.42)"/>
<circle cx="527.9" cy="403.9" r="1.8" fill="rgba(75,50,90,0.42)"/>
<circle cx="490.9" cy="468.8" r="1.8" fill="rgba(75,50,90,0.42)"/>
<circle cx="490.9" cy="511.3" r="1.8" fill="rgba(75,50,90,0.42)"/>
<circle cx="324" cy="370" r="1.8" fill="rgba(75,50,90,0.42)"/>
<circle cx="81" cy="192.6" r="3.3" fill="#fff" stroke="#333" stroke-width="1"/>
<text x="87.3" y="194" font-family="Liberation Sans, sans-serif" font-size="13.6" fill="#222" stroke="#fff" stroke-opacity="0.75" stroke-width="2.5" stroke-linejoin="round" paint-order="stroke">London</text>
<rect x="-20" y="384" width="116.3" height="130" fill="rgba(255,255,255,0.5)"/>
<g font-family="Liberation Sans, sans-serif" fill="#333">
<text x="21.8" y="406.5" text-anchor="end" font-size="14" font-weight="bold">Value</text>
<text x="1" y="430" font-size="14">Sterling (£)</text>
<text x="24.6" y="454" font-size="14">1,200,000</text>
<text x="24.6" y="487.6" font-size="14">200,000</text>
</g>
<g fill="none" stroke="#444" stroke-width="1">
<circle cx="-23.15" cy="474.5" r="26.55"/><circle cx="-23.15" cy="491.7" r="9.3"/>
<line x1="-23" y1="448.4" x2="20.2" y2="448.4"/><line x1="-23" y1="482.4" x2="20.2" y2="482.4"/>
</g>
</svg></div>
<div class="pborder" style="left:-20px;top:170px;width:777px;height:343px"></div>
<div class="phead" style="left:-20px;top:128px;width:777px"></div>
<div class="a h2 w" style="right:1154px;top:139.7px"><span class="cR">Markets (21)</span></div>
<div class="a t14 w" style="right:452px;top:141px">All markets</div>

<!-- dates panel -->
<div class="panel" style="left:-20px;top:533px;width:777px;height:247px"></div>
<div class="pborder" style="left:-20px;top:575px;width:777px;height:205px"></div>
<div class="phead" style="left:-20px;top:533px;width:777px"></div>
<div class="a h2 w" style="right:1113px;top:544.7px"><span class="cR">Dates (1760–1834)</span></div>
<div class="a t14 w" style="right:452px;top:546px">All dates</div>
<div class="a" style="left:-30.5px;top:589px;width:40px;height:31px;border:1px solid #ccc;border-radius:4px;background:#fff"></div>
<div class="a t14" style="left:29px;top:597px;color:#333">Total value as a percentage of GDP</div>

<!-- commodities panel -->
<div class="panel" style="left:777px;top:128px;width:392px;height:652px"></div>
<div class="sub" style="top:170px"></div>
<div class="sub" style="top:454px"></div>
<div class="pborder" style="left:777px;top:170px;width:392px;height:610px"></div>
<div class="phead" style="left:777px;top:128px;width:392px"></div>
<div class="a h2 w" style="left:797.5px;top:139.7px"><span class="cL">Commodities (13)</span></div>
<div class="a t14 w" style="right:40px;top:141px">All commodities</div>
<div class="a h2 d" style="left:798px;top:181.7px"><span class="cL">Imports (5)</span></div>
<div class="a h2 d" style="left:798px;top:465.7px"><span class="cL">Exports (8)</span></div>
<div class="a t14" style="left:797px;top:239px">Broad Cloth</div>
<div class="a t14" style="left:797px;top:283px">Long Ells</div>
<div class="a t14" style="left:797px;top:327px">Miscellaneous</div>
<div class="a t14" style="left:797px;top:371px">Tea</div>
<div class="a t14" style="left:797px;top:415px">Textiles</div>
<div class="a t14" style="left:797px;top:523px">Coin</div>
<div class="a t14" style="left:797px;top:567px">Commodities</div>
<div class="a t14" style="left:797px;top:611px">Copper</div>
<div class="a t14" style="left:797px;top:655px">Iron</div>
<div class="a t14" style="left:797px;top:699px">Lead</div>
<div class="a t14" style="left:797px;top:743px">Silver</div>
<svg class="a" style="left:0;top:0" width="760" height="800" viewBox="0 0 760 800" fill="none">
<line x1="8" y1="651.5" x2="722" y2="651.5" stroke="#cfcfcf" stroke-width="1"/>
<line x1="8" y1="678.5" x2="722" y2="678.5" stroke="#cfcfcf" stroke-width="1"/>
<line x1="8" y1="704.5" x2="722" y2="704.5" stroke="#cfcfcf" stroke-width="1"/>
<line x1="8" y1="731.5" x2="722" y2="731.5" stroke="#cfcfcf" stroke-width="1"/>
<line x1="8.5" y1="731" x2="8.5" y2="741" stroke="#cfcfcf" stroke-width="1"/>
<text x="8.5" y="761" text-anchor="middle" font-family="Liberation Sans, sans-serif" font-size="13.5" fill="#666" stroke="none">1760</text>
<line x1="103.5" y1="731" x2="103.5" y2="741" stroke="#cfcfcf" stroke-width="1"/>
<text x="103.5" y="761" text-anchor="middle" font-family="Liberation Sans, sans-serif" font-size="13.5" fill="#666" stroke="none">1770</text>
<line x1="198.5" y1="731" x2="198.5" y2="741" stroke="#cfcfcf" stroke-width="1"/>
<text x="198.5" y="761" text-anchor="middle" font-family="Liberation Sans, sans-serif" font-size="13.5" fill="#666" stroke="none">1780</text>
<line x1="293.5" y1="731" x2="293.5" y2="741" stroke="#cfcfcf" stroke-width="1"/>
<text x="293.5" y="761" text-anchor="middle" font-family="Liberation Sans, sans-serif" font-size="13.5" fill="#666" stroke="none">1790</text>
<line x1="387.5" y1="731" x2="387.5" y2="741" stroke="#cfcfcf" stroke-width="1"/>
<text x="387.5" y="761" text-anchor="middle" font-family="Liberation Sans, sans-serif" font-size="13.5" fill="#666" stroke="none">1800</text>
<line x1="482.5" y1="731" x2="482.5" y2="741" stroke="#cfcfcf" stroke-width="1"/>
<text x="482.5" y="761" text-anchor="middle" font-family="Liberation Sans, sans-serif" font-size="13.5" fill="#666" stroke="none">1810</text>
<line x1="577.5" y1="731" x2="577.5" y2="741" stroke="#cfcfcf" stroke-width="1"/>
<text x="577.5" y="761" text-anchor="middle" font-family="Liberation Sans, sans-serif" font-size="13.5" fill="#666" stroke="none">1820</text>
<line x1="672.5" y1="731" x2="672.5" y2="741" stroke="#cfcfcf" stroke-width="1"/>
<text x="672.5" y="761" text-anchor="middle" font-family="Liberation Sans, sans-serif" font-size="13.5" fill="#666" stroke="none">1830</text>
<polyline stroke="#4eab58" stroke-width="2" stroke-linejoin="round" points="8.3,723.6 20.8,718.6 45.9,718.6 61.2,724 65.2,718.6 205.6,718.6 210.4,721.6 220.9,718.1 229.6,715.5 234,715.3 237.3,715.9 243.8,718.8 260,718.8 266.2,718.8 277.2,714.8 287,712.9 294.7,708.9 308.9,708.9 335.1,703.3 346.1,703.3 352.6,700.6 365.7,703.3 372.3,703.3 381,697.1 392,694.5 409.5,686.4 418.7,676.6 423.2,680.7 432.4,683.6 448.8,683.6 461.5,672.6 471.4,680.7 489.9,689.3 522.6,680.3 530.3,697.1 540.1,694.3 548.9,694.3 557,689 568.6,700.6 574,700.6 585.6,689.3 594.4,689.3 618.2,696.9 627.2,696.9 637,703.3 645.8,694.3 658.7,689.3 668.1,700.6 677.9,708.7 696.5,713.1 700.9,718.6 721.9,718.6"/>
<polyline stroke="#a26db2" stroke-width="2" stroke-linejoin="round" points="8.3,704.3 20.1,704.3 26.7,700 35,700 47,694.9 85.3,694.9 89.2,695.6 95.1,694.7 102.3,694.9 115.9,700 135.6,700 142.6,704.3 154.2,700 209.5,700 220.9,694.9 231.8,700.2 260,700.2 288.1,700.2 292.9,694.9 336.9,694.9 347.1,691.2 352.6,687.5 358.7,694.9 371.2,694.9 383.9,691 395.3,691 406.2,687.3 421.1,683.1 441.2,683.1 447.3,687.7 455.4,679.4 462.6,679.4 487.1,663.5 495.8,663.5 516.1,651.2 521.5,656.2 544.1,666.7 547.8,673.7 564.2,687.7 574.5,674.2 582.3,674.2 593.1,663.2 599.8,666.7 609.5,656.2 617.3,679.4 629.4,679.4 642,670.2 654.9,687.5 665.4,682.9 681.2,687.5 690.6,687.5 711.8,694.9 721.9,700.4"/>
<line x1="8.3" y1="637" x2="8.3" y2="731.5" stroke="#555" stroke-width="2"/>
<path d="M6.700000000000001,637.2 L6.700000000000001,648.2 L0.5000000000000009,642.7 Z M9.9,637.2 L9.9,648.2 L16.1,642.7 Z" fill="#666" stroke="none"/>
<line x1="721.9" y1="637" x2="721.9" y2="731.5" stroke="#555" stroke-width="2"/>
<path d="M720.3,637.2 L720.3,648.2 L714.1,642.7 Z M723.5,637.2 L723.5,648.2 L729.6999999999999,642.7 Z" fill="#666" stroke="none"/>
</svg>
<svg class="a" style="left:0;top:0" width="1189" height="800" viewBox="0 0 1189 800" fill="none" stroke-width="2" stroke-linejoin="round" stroke-linecap="butt">
<polyline stroke="#a26db2" points="928.7,251.8 933.1,244.8 942.2,244.8 944.6,246.8 947.5,244.8 950.9,249.2 954.5,244.8 957.9,247.2 961.4,249.2 967.6,246.8 970.3,234.7 973.1,249.2 977.5,252.2 988.6,252.2 991.3,255.9 997.9,246.4 1002.4,252.7 1004.8,250.4 1016.9,250.4 1018.9,252.2 1023.5,248.8 1029.8,246.8 1033,250.8 1035.7,249.2 1042.5,250.8 1042.5,246.8 1049.2,244.6 1052.6,243.2 1056.2,239.1 1062.5,242.8"/>
<polyline stroke="#a26db2" points="1069.4,240.1 1072.4,240.1 1075.8,242 1078.9,245.4 1086.5,238.5 1089.6,245.4 1091.6,242.8 1094.6,245.4 1098.4,245.4 1105.1,250.8 1109.7,237.1 1113.2,233.9 1114.8,238.5 1118.4,236.7 1122.5,240.1 1124.5,240.5 1127.9,242.8 1129.9,245.6 1134.4,245.6 1137.4,242.8 1143.2,247.6 1145.7,242.8 1148.5,247.2"/>
<polyline stroke="#a26db2" points="1030.1,297.2 1033.8,296.9 1035.8,301.3 1041.5,288.8 1043.5,300.3 1046.9,288.5 1047.9,288.5 1049.3,300.3 1059.7,300.3 1062.7,291.5 1066.1,289.7 1069.8,300.6 1075.8,300.6 1078.2,284.1 1081,276.7 1082.9,288.2 1086.3,296.6"/>
<polyline stroke="#a26db2" points="929.3,343.7 933.1,341.5 940.2,341.5 945.6,344.3 946.8,341.5 990.2,341.5 991.7,342.9 997.9,339.8 1001.7,341.7 1008.8,341.7 1014.9,339.2 1017.9,337.2 1020.9,337.2 1030,334.6 1033,334.6 1035.7,333.2 1041.1,334.8 1044.1,332.2 1048.2,330.4 1053.2,326.7 1055.6,322.5 1057.7,324.7 1061.3,326.1 1064.9,326.1 1069.2,321.1 1073,325.1 1077.8,328.5 1087.5,324.7 1090.2,332 1093.2,330.8 1095.2,330.8 1098.2,328.1 1102.3,333.8 1104.1,333.2 1107.3,328.5 1110.1,328.5 1116.8,331.8 1120.2,332.2 1122.9,334.8 1125.5,330.8 1129.5,328.5 1133,333.8 1136,337.2 1141,339.2 1143,341.9 1148.7,341.9"/>
<polyline stroke="#a26db2" points="929.3,382.4 934.5,378.8 941.8,386.9 946.2,382.8 952.3,382.8 958.4,383.8 964.8,383.8 966.8,382.2 969,376.8 971.7,379.2 974.5,374.8 977.5,374.8 979.7,377.2 982.6,374.8 986.2,374.8 988.6,382.8 994.3,374.8 996.3,379.6 1001.7,383.8 1007.8,379.6 1010.4,380.8 1012,377.2 1013.9,366.1 1020.3,382.2 1022.1,383.8 1024.6,379.6 1026.2,378.8 1029.6,373.1 1033,377.8 1039.1,377.8 1042.1,384.2 1047.2,374.8 1049.8,374.8 1052.8,385.3 1054.8,381.8 1057.3,386.9 1061.3,376.8 1063.3,380.8 1069.4,381.8 1069.4,384.2 1073.4,377.8 1080.5,377.8 1080.5,379.6 1082.7,377.8 1085.1,380.8 1087.9,378.2 1091.6,379.2 1095.2,379.2 1097.2,376.8 1104.1,371.7 1106.7,371.7 1112.2,386.3"/>
<polyline stroke="#a26db2" points="929.3,431.7 933.1,431.7 935.1,429.9 937.8,429.9 941.2,427.8 952.3,427.8 954.7,428.2 958.4,427.8 962,429.9 968.4,429.9 970.5,431.9 974.5,429.9 991.1,429.9 994.7,427.8 998.1,429.9 1015.3,429.9 1016.9,427.8 1030.6,427.8 1033.6,426.2 1035.5,424.8 1037.5,427.8 1041.1,427.8 1045.6,426.2 1049.2,426.2 1053.2,424.2 1057.3,422.8 1062.9,422.8 1064.5,424.8 1067.4,421.8 1069.4,421.2 1076.4,415.1 1079.5,414.7 1085.5,409.7 1087.5,412.1 1094,416.1 1095.6,419.2 1100.7,424.8 1103.7,419.6 1106.1,419.2 1109.3,414.7 1111.8,416.1 1114.4,411.1 1117.2,421.2 1120.8,421.2 1124.5,417.6 1128.5,424.8 1131.5,422.8 1136.4,424.6 1139.6,424.8 1144.1,426.8 1148.7,429.7"/>
<polyline stroke="#4eab58" points="928.7,535.8 933.1,528.8 942.2,528.8 944.6,530.8 947.5,528.8 950.9,533.2 954.5,528.8 957.9,531.2 961.4,533.2 967.6,530.8 970.3,518.7 973.1,533.2 977.5,536.2 988.6,536.2 991.3,539.9 997.9,530.4 1002.4,536.7 1004.8,534.4 1016.9,534.4 1018.9,536.2 1023.5,532.8 1029.8,530.8 1033,534.8 1035.7,533.2 1042.5,534.8 1042.5,530.8 1049.2,528.6 1052.6,527.2 1056.2,523.1 1062.5,526.8"/>
<polyline stroke="#4eab58" points="1069.4,524.1 1072.4,524.1 1075.8,526 1078.9,529.4 1086.5,522.5 1089.6,529.4 1091.6,526.8 1094.6,529.4 1098.4,529.4 1105.1,534.8 1109.7,521.1 1113.2,517.9 1114.8,522.5 1118.4,520.7 1122.5,524.1 1124.5,524.5 1127.9,526.8 1129.9,529.6 1134.4,529.6 1137.4,526.8 1143.2,531.6 1145.7,526.8 1148.5,531.2"/>
<polyline stroke="#4eab58" points="1030.1,581.2 1033.8,580.9 1035.8,585.3 1041.5,572.8 1043.5,584.3 1046.9,572.5 1047.9,572.5 1049.3,584.3 1059.7,584.3 1062.7,575.5 1066.1,573.7 1069.8,584.6 1075.8,584.6 1078.2,568.1 1081,560.7 1082.9,572.2 1086.3,580.6"/>
<polyline stroke="#4eab58" points="929.3,627.7 933.1,625.5 940.2,625.5 945.6,628.3 946.8,625.5 990.2,625.5 991.7,626.9 997.9,623.8 1001.7,625.7 1008.8,625.7 1014.9,623.2 1017.9,621.2 1020.9,621.2 1030,618.6 1033,618.6 1035.7,617.2 1041.1,618.8 1044.1,616.2 1048.2,614.4 1053.2,610.7 1055.6,606.5 1057.7,608.7 1061.3,610.1 1064.9,610.1 1069.2,605.1 1073,609.1 1077.8,612.5 1087.5,608.7 1090.2,616 1093.2,614.8 1095.2,614.8 1098.2,612.1 1102.3,617.8 1104.1,617.2 1107.3,612.5 1110.1,612.5 1116.8,615.8 1120.2,616.2 1122.9,618.8 1125.5,614.8 1129.5,612.5 1133,617.8 1136,621.2 1141,623.2 1143,625.9 1148.7,625.9"/>
<polyline stroke="#4eab58" points="929.3,666.4 934.5,662.8 941.8,670.9 946.2,666.8 952.3,666.8 958.4,667.8 964.8,667.8 966.8,666.2 969,660.8 971.7,663.2 974.5,658.8 977.5,658.8 979.7,661.2 982.6,658.8 986.2,658.8 988.6,666.8 994.3,658.8 996.3,663.6 1001.7,667.8 1007.8,663.6 1010.4,664.8 1012,661.2 1013.9,650.1 1020.3,666.2 1022.1,667.8 1024.6,663.6 1026.2,662.8 1029.6,657.1 1033,661.8 1039.1,661.8 1042.1,668.2 1047.2,658.8 1049.8,658.8 1052.8,669.3 1054.8,665.8 1057.3,670.9 1061.3,660.8 1063.3,664.8 1069.4,665.8 1069.4,668.2 1073.4,661.8 1080.5,661.8 1080.5,663.6 1082.7,661.8 1085.1,664.8 1087.9,662.2 1091.6,663.2 1095.2,663.2 1097.2,660.8 1104.1,655.7 1106.7,655.7 1112.2,670.3"/>
<polyline stroke="#4eab58" points="929.3,715.7 933.1,715.7 935.1,713.9 937.8,713.9 941.2,711.8 952.3,711.8 954.7,712.2 958.4,711.8 962,713.9 968.4,713.9 970.5,715.9 974.5,713.9 991.1,713.9 994.7,711.8 998.1,713.9 1015.3,713.9 1016.9,711.8 1030.6,711.8 1033.6,710.2 1035.5,708.8 1037.5,711.8 1041.1,711.8 1045.6,710.2 1049.2,710.2 1053.2,708.2 1057.3,706.8 1062.9,706.8 1064.5,708.8 1067.4,705.8 1069.4,705.2 1076.4,699.1 1079.5,698.7 1085.5,693.7 1087.5,696.1 1094,700.1 1095.6,703.2 1100.7,708.8 1103.7,703.6 1106.1,703.2 1109.3,698.7 1111.8,700.1 1114.4,695.1 1117.2,705.2 1120.8,705.2 1124.5,701.6 1128.5,708.8 1131.5,706.8 1136.4,708.6 1139.6,708.8 1144.1,710.8 1148.7,713.7"/>
<polyline stroke="#4eab58" points="929.3,759.7 933.1,757.5 940.2,757.5 945.6,760.3 946.8,757.5 990.2,757.5 991.7,758.9 997.9,755.8 1001.7,757.7 1008.8,757.7 1014.9,755.2 1017.9,753.2 1020.9,753.2 1030,750.6 1033,750.6 1035.7,749.2 1041.1,750.8 1044.1,748.2 1048.2,746.4 1053.2,742.7 1055.6,738.5 1057.7,740.7 1061.3,742.1 1064.9,742.1 1069.2,737.1 1073,741.1 1077.8,744.5 1087.5,740.7 1090.2,748 1093.2,746.8 1095.2,746.8 1098.2,744.1 1102.3,749.8 1104.1,749.2 1107.3,744.5 1110.1,744.5 1116.8,747.8 1120.2,748.2 1122.9,750.8 1125.5,746.8 1129.5,744.5 1133,749.8 1136,753.2 1141,755.2 1143,757.9 1148.7,757.9"/>
</svg>
</div>
</body>
</html>
